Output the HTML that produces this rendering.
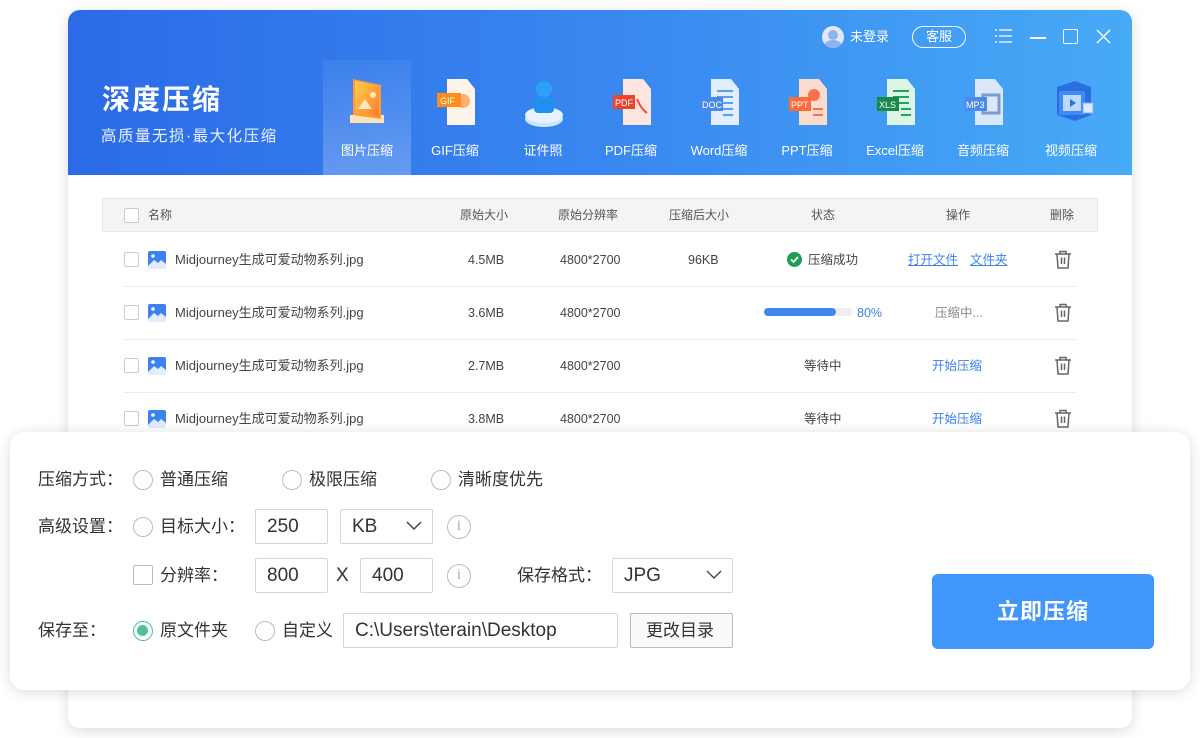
<!DOCTYPE html>
<html><head><meta charset="utf-8"><style>
*{margin:0;padding:0;box-sizing:border-box}
body{width:1200px;height:738px;background:#fff;position:relative;overflow:hidden;font-family:"Liberation Sans","Noto Sans CJK SC",sans-serif;color:#333;line-height:1.15}
.a{position:absolute}
.win{left:68px;top:10px;width:1064px;height:718px;border-radius:12px;background:#fff;box-shadow:0 3px 14px rgba(0,0,0,.14);overflow:hidden}
.hdr{left:0;top:0;width:1064px;height:165px;background:linear-gradient(90deg,#2c6ae6 0%,#3887f0 50%,#47aaf6 100%)}
.tab{top:50px;width:88px;height:115px;text-align:center;color:#fff;font-size:13px}
.tab .lb{position:absolute;left:0;right:0;top:84px}
.tab .ic{position:absolute;left:24px;top:15px;width:42px;height:54px}
.th{font-size:12px;color:#555;top:209px}
.row{font-size:12.5px;color:#444}
.cb{width:15px;height:15px;border:1px solid #ccc;border-radius:2px;background:#fff}
.sep{height:1px;background:#ececec;left:124px;width:952px}
.lnk{color:#3b82f0}
.panel{left:10px;top:432px;width:1180px;height:258px;background:#fff;border-radius:14px;box-shadow:0 2px 14px rgba(0,0,0,.14)}
.lab{font-size:17px;color:#333}
.rad{width:20px;height:20px;border:1px solid #bbb;border-radius:50%;background:#fff}
.inp{height:35px;border:1px solid #d6d6d6;background:#fff;font-size:19px;color:#333;padding-left:11px;line-height:33px;border-radius:2px}
.info{width:24px;height:24px;border:1.5px solid #bbb;border-radius:50%;color:#aaa;font-size:15px;text-align:center;line-height:21px;font-family:"Liberation Serif",serif}
</style></head><body>
<div class="a win">
 <div class="a hdr">
  <div class="a" style="left:34px;top:74px;color:#fff;font-size:28px;font-weight:bold;letter-spacing:2px">深度压缩</div>
  <div class="a" style="left:33px;top:118px;color:#e8f0ff;font-size:15.5px;letter-spacing:1.5px">高质量无损·最大化压缩</div>
  <div class="a" style="left:255px;top:50px;width:88px;height:115px;background:linear-gradient(180deg,rgba(255,255,255,.05),rgba(255,255,255,.24))"></div>
  <div class="a" style="left:754px;top:16px;width:22px;height:22px;border-radius:50%;background:#dfe9fb;overflow:hidden"><div class="a" style="left:6px;top:4px;width:10px;height:10px;border-radius:50%;background:#8fb3ee"></div><div class="a" style="left:2px;top:14px;width:18px;height:12px;border-radius:50%;background:#8fb3ee"></div></div>
  <div class="a" style="left:782px;top:20px;color:#fff;font-size:13px">未登录</div>
  <div class="a" style="left:844px;top:16px;width:54px;height:22px;border:1.5px solid #fff;border-radius:11px;color:#fff;font-size:13px;text-align:center;line-height:19px">客服</div>
  <svg class="a" style="left:926px;top:18px" width="20" height="16"><g stroke="#fff" stroke-width="1.3"><path d="M5 2H18M5 8H18M5 14H18"/><path d="M1 2H3M1 8H3M1 14H3"/></g></svg>
  <div class="a" style="left:962px;top:27px;width:16px;height:1.5px;background:#fff"></div>
  <div class="a" style="left:995px;top:19px;width:15px;height:15px;border:1.5px solid #fff;border-radius:2px"></div>
  <svg class="a" style="left:1028px;top:19px" width="15" height="15"><path d="M1 1L14 14M14 1L1 14" stroke="#fff" stroke-width="1.4"/></svg>
 </div>
 <div class="a tab" style="left:255px"><svg class="ic" viewBox="0 0 42 54"><rect x="3" y="40" width="34" height="8" fill="#fde4b8"/><path d="M6 4L34 10V44L6 40Z" fill="#ff9a3c"/><path d="M8 6L32 11V42L8 38Z" fill="url(#g1)"/><defs><linearGradient id="g1" x1="0" y1="0" x2="1" y2="1"><stop offset="0" stop-color="#ffd24a"/><stop offset="1" stop-color="#ff7a2a"/></linearGradient></defs><path d="M11 34L18 24L25 34Z" fill="#ffe7c2"/><circle cx="26" cy="20" r="3" fill="#ffe7c2"/></svg><div class="lb">图片压缩</div></div>
 <div class="a tab" style="left:343px"><svg class="ic" viewBox="0 0 42 54"><path d="M12 4H32L40 14V50H12Z" fill="#fdf3ea"/><circle cx="28" cy="26" r="7" fill="#ffb070"/><rect x="2" y="18" width="24" height="14" fill="#ff8c1a"/><text x="5" y="29" font-size="9" fill="#fff" font-family="Liberation Sans">GIF</text></svg><div class="lb">GIF压缩</div></div>
 <div class="a tab" style="left:431px"><svg class="ic" viewBox="0 0 42 54"><ellipse cx="21" cy="44" rx="19" ry="8" fill="#cde6ff"/><ellipse cx="21" cy="40" rx="19" ry="8" fill="#e6f3ff"/><rect x="11" y="22" width="20" height="16" rx="4" fill="#1e90f0"/><circle cx="21" cy="14" r="8" fill="#2fa0f8"/></svg><div class="lb">证件照</div></div>
 <div class="a tab" style="left:519px"><svg class="ic" viewBox="0 0 42 54"><path d="M12 4H32L40 14V50H12Z" fill="#fde5e0"/><rect x="2" y="20" width="22" height="14" fill="#f0432c"/><text x="4" y="31" font-size="9" fill="#fff" font-family="Liberation Sans">PDF</text><path d="M26 24Q30 34 36 38" stroke="#f05030" stroke-width="2" fill="none"/></svg><div class="lb">PDF压缩</div></div>
 <div class="a tab" style="left:607px"><svg class="ic" viewBox="0 0 42 54"><path d="M12 4H32L40 14V50H12Z" fill="#e3eefd"/><g stroke="#5aa0f0" stroke-width="2"><path d="M18 16H34M18 22H34M18 28H34M24 34H34M24 40H34"/></g><rect x="2" y="22" width="22" height="14" fill="#4a88ee"/><text x="3" y="33" font-size="9" fill="#fff" font-family="Liberation Sans">DOC</text></svg><div class="lb">Word压缩</div></div>
 <div class="a tab" style="left:695px"><svg class="ic" viewBox="0 0 42 54"><path d="M12 4H32L40 14V50H12Z" fill="#fddcd0"/><circle cx="27" cy="20" r="6" fill="#ff7048"/><g stroke="#ff7048" stroke-width="2"><path d="M26 34H36M26 40H36"/></g><rect x="2" y="22" width="22" height="14" fill="#ff6a3a"/><text x="4" y="33" font-size="9" fill="#fff" font-family="Liberation Sans">PPT</text></svg><div class="lb">PPT压缩</div></div>
 <div class="a tab" style="left:783px"><svg class="ic" viewBox="0 0 42 54"><path d="M12 4H32L40 14V50H12Z" fill="#dcf5e6"/><g stroke="#22a45a" stroke-width="2"><path d="M18 16H34M18 22H34M18 28H34M26 34H36M26 40H36"/></g><rect x="2" y="22" width="22" height="14" fill="#168a46"/><text x="4" y="33" font-size="9" fill="#fff" font-family="Liberation Sans">XLS</text></svg><div class="lb">Excel压缩</div></div>
 <div class="a tab" style="left:871px"><svg class="ic" viewBox="0 0 42 54"><path d="M12 4H32L40 14V50H12Z" fill="#dbe8fb"/><rect x="20" y="20" width="16" height="18" fill="none" stroke="#7a9ccc" stroke-width="3"/><rect x="2" y="22" width="22" height="14" fill="#4a88ee"/><text x="3" y="33" font-size="9" fill="#fff" font-family="Liberation Sans">MP3</text></svg><div class="lb">音频压缩</div></div>
 <div class="a tab" style="left:959px"><svg class="ic" viewBox="0 0 42 54" style="left:20px;width:50px"><path d="M6 12L24 6L40 12V40L24 46L6 40Z" fill="#2a6fe0"/><rect x="8" y="16" width="26" height="24" fill="#3f8af5"/><rect x="12" y="20" width="18" height="16" fill="#bcd8ff"/><path d="M19 24L25 28L19 32Z" fill="#2a6fe0"/><rect x="32" y="28" width="10" height="10" fill="#dbeaff" stroke="#7fb0f5"/></svg><div class="lb">视频压缩</div></div>
 <div class="a" style="left:34px;top:188px;width:996px;height:34px;background:#f4f4f4;border:1px solid #e8e8e8"></div>
</div>
<div class="a cb" style="left:124px;top:208px"></div>
<div class="a th" style="left:148px">名称</div>
<div class="a th" style="left:460px">原始大小</div>
<div class="a th" style="left:558px">原始分辨率</div>
<div class="a th" style="left:669px">压缩后大小</div>
<div class="a th" style="left:811px">状态</div>
<div class="a th" style="left:946px">操作</div>
<div class="a th" style="left:1050px">删除</div>

<div class="a sep" style="top:286px"></div><div class="a sep" style="top:339px"></div><div class="a sep" style="top:392px"></div>

<div class="a cb" style="left:124px;top:252px"></div>
<div class="a cb" style="left:124px;top:305px"></div>
<div class="a cb" style="left:124px;top:358px"></div>
<div class="a cb" style="left:124px;top:411px"></div>

<svg class="a" style="left:148px;top:251px" width="18" height="18"><rect width="18" height="18" rx="2" fill="#3b82f0"/><circle cx="5" cy="5" r="1.8" fill="#fff"/><path d="M0 15L6 9L10 12L13 9L18 13V18H0Z" fill="#fff" opacity=".85"/></svg>
<svg class="a" style="left:148px;top:304px" width="18" height="18"><rect width="18" height="18" rx="2" fill="#3b82f0"/><circle cx="5" cy="5" r="1.8" fill="#fff"/><path d="M0 15L6 9L10 12L13 9L18 13V18H0Z" fill="#fff" opacity=".85"/></svg>
<svg class="a" style="left:148px;top:357px" width="18" height="18"><rect width="18" height="18" rx="2" fill="#3b82f0"/><circle cx="5" cy="5" r="1.8" fill="#fff"/><path d="M0 15L6 9L10 12L13 9L18 13V18H0Z" fill="#fff" opacity=".85"/></svg>
<svg class="a" style="left:148px;top:410px" width="18" height="18"><rect width="18" height="18" rx="2" fill="#3b82f0"/><circle cx="5" cy="5" r="1.8" fill="#fff"/><path d="M0 15L6 9L10 12L13 9L18 13V18H0Z" fill="#fff" opacity=".85"/></svg>

<div class="a row" style="left:175px;top:253px;font-size:13px">Midjourney生成可爱动物系列.jpg</div>
<div class="a row" style="left:175px;top:306px;font-size:13px">Midjourney生成可爱动物系列.jpg</div>
<div class="a row" style="left:175px;top:359px;font-size:13px">Midjourney生成可爱动物系列.jpg</div>
<div class="a row" style="left:175px;top:412px;font-size:13px">Midjourney生成可爱动物系列.jpg</div>
<div class="a row" style="left:468px;top:253px">4.5MB</div>
<div class="a row" style="left:468px;top:306px">3.6MB</div>
<div class="a row" style="left:468px;top:359px">2.7MB</div>
<div class="a row" style="left:468px;top:412px">3.8MB</div>
<div class="a row" style="left:560px;top:253px">4800*2700</div>
<div class="a row" style="left:560px;top:306px">4800*2700</div>
<div class="a row" style="left:560px;top:359px">4800*2700</div>
<div class="a row" style="left:560px;top:412px">4800*2700</div>
<div class="a row" style="left:688px;top:253px">96KB</div>
<svg class="a" style="left:787px;top:252px" width="15" height="15"><circle cx="7.5" cy="7.5" r="7.5" fill="#1f9d55"/><path d="M4 7.5L6.5 10L11 5" stroke="#fff" stroke-width="1.8" fill="none"/></svg>
<div class="a row" style="left:808px;top:253px">压缩成功</div>
<div class="a row lnk" style="left:908px;top:253px;text-decoration:underline">打开文件</div>
<div class="a row lnk" style="left:970px;top:253px;text-decoration:underline">文件夹</div>
<div class="a" style="left:764px;top:308px;width:89px;height:8px;border-radius:4px;background:#eee"></div>
<div class="a" style="left:764px;top:308px;width:72px;height:8px;border-radius:4px;background:#4287f0"></div>
<div class="a row lnk" style="left:857px;top:306px">80%</div>
<div class="a row" style="left:935px;top:306px;color:#888">压缩中...</div>
<div class="a row" style="left:804px;top:359px">等待中</div>
<div class="a row" style="left:804px;top:412px">等待中</div>
<div class="a row lnk" style="left:932px;top:359px">开始压缩</div>
<div class="a row lnk" style="left:932px;top:412px">开始压缩</div>
<svg class="a" style="left:1054px;top:250px" width="18" height="19"><g stroke="#666" stroke-width="1.5" fill="none"><path d="M1 4H17M6 4V1.5H12V4M3 4L4 18H14L15 4M7.5 7.5V14M10.5 7.5V14"/></g></svg>
<svg class="a" style="left:1054px;top:303px" width="18" height="19"><g stroke="#666" stroke-width="1.5" fill="none"><path d="M1 4H17M6 4V1.5H12V4M3 4L4 18H14L15 4M7.5 7.5V14M10.5 7.5V14"/></g></svg>
<svg class="a" style="left:1054px;top:356px" width="18" height="19"><g stroke="#666" stroke-width="1.5" fill="none"><path d="M1 4H17M6 4V1.5H12V4M3 4L4 18H14L15 4M7.5 7.5V14M10.5 7.5V14"/></g></svg>
<svg class="a" style="left:1054px;top:409px" width="18" height="19"><g stroke="#666" stroke-width="1.5" fill="none"><path d="M1 4H17M6 4V1.5H12V4M3 4L4 18H14L15 4M7.5 7.5V14M10.5 7.5V14"/></g></svg>

<div class="a panel"></div>
<div class="a lab" style="left:38px;top:470px">压缩方式：</div>
<div class="a rad" style="left:133px;top:470px"></div><div class="a lab" style="left:160px;top:470px">普通压缩</div>
<div class="a rad" style="left:282px;top:470px"></div><div class="a lab" style="left:309px;top:470px">极限压缩</div>
<div class="a rad" style="left:431px;top:470px"></div><div class="a lab" style="left:458px;top:470px">清晰度优先</div>

<div class="a lab" style="left:38px;top:517px">高级设置：</div>
<div class="a rad" style="left:133px;top:517px"></div><div class="a lab" style="left:160px;top:517px">目标大小：</div>
<div class="a inp" style="left:255px;top:509px;width:73px">250</div>
<div class="a inp" style="left:340px;top:509px;width:93px">KB</div>
<svg class="a" style="left:405px;top:520px" width="18" height="12"><path d="M2 2L9 9L16 2" stroke="#444" stroke-width="1.5" fill="none"/></svg>
<div class="a info" style="left:447px;top:515px">i</div>

<div class="a cb" style="left:133px;top:565px;width:20px;height:20px;border-color:#bbb"></div>
<div class="a lab" style="left:160px;top:566px">分辨率：</div>
<div class="a inp" style="left:255px;top:558px;width:73px">800</div>
<div class="a lab" style="left:336px;top:565px;font-size:19px">X</div>
<div class="a inp" style="left:360px;top:558px;width:73px">400</div>
<div class="a info" style="left:447px;top:564px">i</div>
<div class="a lab" style="left:517px;top:566px">保存格式：</div>
<div class="a inp" style="left:612px;top:558px;width:121px">JPG</div>
<svg class="a" style="left:705px;top:569px" width="18" height="12"><path d="M2 2L9 9L16 2" stroke="#444" stroke-width="1.4" fill="none"/></svg>

<div class="a lab" style="left:38px;top:621px">保存至：</div>
<div class="a rad" style="left:133px;top:621px;border-color:#4ec295;border-width:1.5px"><div class="a" style="left:3px;top:3px;width:11px;height:11px;border-radius:50%;background:#4ec295"></div></div>
<div class="a lab" style="left:160px;top:621px">原文件夹</div>
<div class="a rad" style="left:255px;top:621px"></div><div class="a lab" style="left:282px;top:621px">自定义</div>
<div class="a inp" style="left:343px;top:613px;width:275px">C:\Users\terain\Desktop</div>
<div class="a inp" style="left:630px;top:613px;width:103px;font-size:17px;padding-left:15px;border-color:#bbb;background:#fafafa">更改目录</div>

<div class="a" style="left:932px;top:574px;width:222px;height:75px;background:#4196fb;border-radius:6px;color:#fff;font-size:22px;text-align:center;line-height:75px;font-weight:bold;letter-spacing:1px">立即压缩</div>
</body></html>
